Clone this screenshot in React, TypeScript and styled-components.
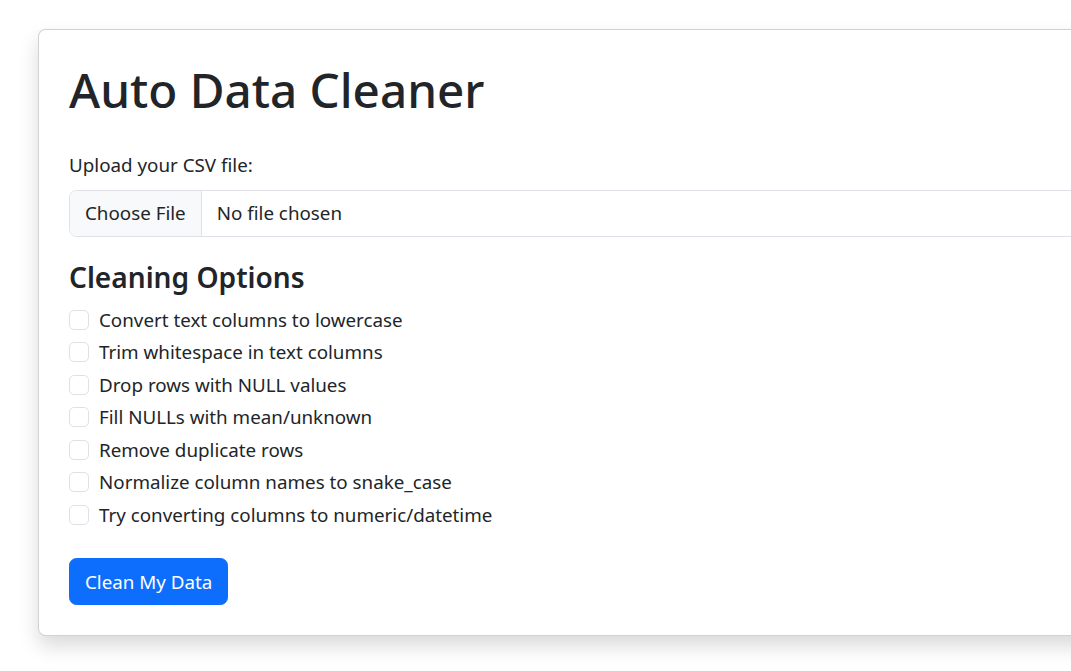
import React from "react";
import styled, { createGlobalStyle } from "styled-components";

const GlobalStyle = createGlobalStyle`
  html, body {
    margin: 0;
    padding: 0;
    background: #ffffff;
    overflow: hidden;
  }
  body {
    font-family: "Noto Sans", "Open Sans", sans-serif;
    color: #212529;
    font-size: 18.8px;
    line-height: 1.5;
  }
  * { box-sizing: border-box; }
`;

const Page = styled.div`
  padding: 29px 0 40px 38px;
  width: 1300px;
`;

const Card = styled.div`
  width: 1200px;
  background: #fff;
  border: 1px solid rgba(0, 0, 0, 0.175);
  border-radius: 7.5px;
  box-shadow: 0 10px 20px rgba(0, 0, 0, 0.15);
  padding: 30px;
  display: flex;
  flex-direction: column;
  align-items: flex-start;
`;

const Title = styled.h1`
  margin: 0 0 30px;
  font-size: 47.6px;
  font-weight: 500;
  line-height: 60px;
`;

const Label = styled.label`
  display: block;
  margin-bottom: 10px;
  line-height: 30px;
`;

const FileInput = styled.div`
  display: flex;
  align-items: stretch;
  width: 100%;
  height: 47px;
  border: 1px solid #dee2e6;
  border-radius: 7.5px;
  overflow: hidden;
  margin-bottom: 23px;
`;

const FileButton = styled.span`
  display: flex;
  align-items: center;
  padding: 0 15px;
  background: #f8f9fa;
  border-right: 1px solid #dee2e6;
  color: #212529;
`;

const FileName = styled.span`
  display: flex;
  align-items: center;
  padding: 0 15px;
`;

const Subtitle = styled.h4`
  margin: 0 0 10px;
  font-size: 28.1px;
  font-weight: 600;
  line-height: 34.5px;
`;

const CheckList = styled.div`
  display: flex;
  flex-direction: column;
  width: 100%;
`;

const CheckRow = styled.label`
  display: flex;
  align-items: flex-start;
  gap: 10px;
  line-height: 30px;
  margin-bottom: 2.5px;
`;

const Box = styled.span`
  flex: none;
  width: 20px;
  height: 20px;
  margin-top: 5px;
  border: 1px solid #dee2e6;
  border-radius: 5px;
  background: #fff;
`;

const Button = styled.button`
  margin-top: 26px;
  font-family: inherit;
  font-size: 18.8px;
  line-height: 30px;
  padding: 7.5px 15px;
  border: 1px solid #0d6efd;
  border-radius: 7.5px;
  background: #0d6efd;
  color: #fff;
  cursor: pointer;
`;

const options = [
  "Convert text columns to lowercase",
  "Trim whitespace in text columns",
  "Drop rows with NULL values",
  "Fill NULLs with mean/unknown",
  "Remove duplicate rows",
  "Normalize column names to snake_case",
  "Try converting columns to numeric/datetime",
];

export default function App() {
  return (
    <>
      <GlobalStyle />
      <Page>
        <Card>
          <Title>Auto Data Cleaner</Title>
          <Label>Upload your CSV file:</Label>
          <FileInput>
            <FileButton>Choose File</FileButton>
            <FileName>No file chosen</FileName>
          </FileInput>
          <Subtitle>Cleaning Options</Subtitle>
          <CheckList>
            {options.map((o) => (
              <CheckRow key={o}>
                <Box />
                <span>{o}</span>
              </CheckRow>
            ))}
          </CheckList>
          <Button>Clean My Data</Button>
        </Card>
      </Page>
    </>
  );
}
